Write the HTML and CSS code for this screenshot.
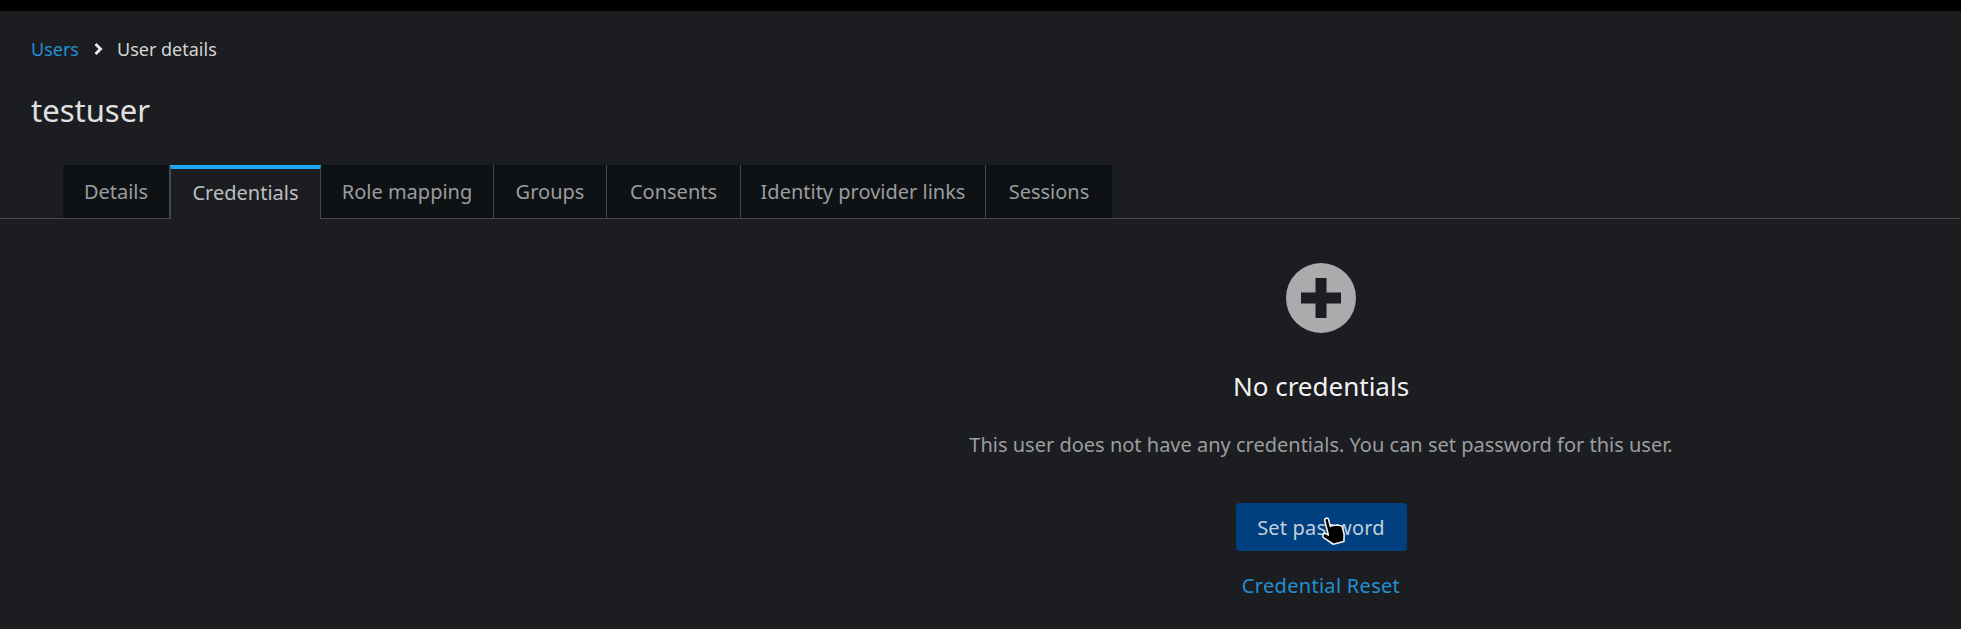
FILE: index.html
```html
<!DOCTYPE html>
<html lang="en">
<head>
    <meta charset="UTF-8">
    <meta name="viewport" content="width=device-width, initial-scale=1.0">
    <title>User details</title>
    <link rel="stylesheet" href="styles.css">
</head>
<body>

    <div class="top-bar"></div>

    <nav class="breadcrumb">
        <a href="#">Users</a>
        <svg class="breadcrumb-arrow" viewBox="0 0 10 14" width="10" height="14">
            <path d="M2.5 2 L7.5 7 L2.5 12" fill="none" stroke="#e6e6e6" stroke-width="3"/>
        </svg>
        <span>User details</span>
    </nav>

    <h1 class="page-title">testuser</h1>

    <div class="tabs">
        <a class="tab" href="#">Details</a>
        <a class="tab active" href="#">Credentials</a>
        <a class="tab" href="#">Role mapping</a>
        <a class="tab" href="#">Groups</a>
        <a class="tab" href="#">Consents</a>
        <a class="tab" href="#">Identity provider links</a>
        <a class="tab" href="#">Sessions</a>
    </div>

    <div class="tab-content">
        <div class="empty-state">
            <svg class="empty-icon" viewBox="0 0 70 70" width="70" height="70">
                <circle cx="35" cy="35" r="35" fill="#aaabad"/>
                <path d="M29.5 15 H40.5 V29.5 H55 V40.5 H40.5 V55 H29.5 V40.5 H15 V29.5 H29.5 Z" fill="#1b1d21"/>
            </svg>
            <h2>No credentials</h2>
            <p>This user does not have any credentials. You can set password for this user.</p>
            <div class="button-wrap">
                <button class="btn-primary">Set password</button>
                <svg class="cursor" viewBox="0 0 28 32" width="29" height="32">
                    <path transform="rotate(-14 14 16)" d="M9 4 C9 1.5 13 1.5 13 4 V11 C15 10.5 23.5 11.5 24.5 14 V22 L22.5 29 H11.5 L3.5 20 C2.5 17.5 5 15.5 7 17 L9 19 Z" fill="#000" stroke="#f2f2f2" stroke-width="1.6" stroke-linejoin="round"/>
                </svg>
            </div>
            <a class="secondary-link" href="#">Credential Reset</a>
        </div>
    </div>

</body>
</html>
```

FILE: styles.css
```css
body {
    font-family: "Noto Sans", sans-serif;
    font-size: 20px;
    background: #1b1d21;
    color: #d4d4d4;
    margin: 0;
    height: 629px;
    overflow: hidden;
}

.top-bar {
    height: 11px;
    background: #000;
}

.breadcrumb {
    display: flex;
    align-items: center;
    gap: 14px;
    padding: 25px 31px 0;
    font-size: 18px;
    line-height: 26px;
}

.breadcrumb a {
    color: #2290d2;
    text-decoration: none;
}

.page-title {
    margin: 0;
    padding: 30px 31px 0;
    font-size: 31px;
    font-weight: 400;
    line-height: 36px;
    color: #e0e0e0;
}

.tabs {
    display: grid;
    grid-template-columns: 107px 151px 173px 113px 134px 245px 126px;
    margin-top: 37px;
    padding-left: 63px;
    height: 53px;
    border-bottom: 1px solid #47484b;
}

.tab {
    height: 53px;
    line-height: 54px;
    box-sizing: border-box;
    background: #0f1214;
    border-right: 1px solid #47484b;
    color: #9b9c9e;
    text-align: center;
    text-decoration: none;
    white-space: nowrap;
}

.tab:last-child {
    border-right: none;
}

.tab.active {
    background: #1b1d21;
    border-top: 4px solid #1fa7f8;
    border-left: 1px solid #47484b;
    height: 54px;
    line-height: 48px;
    color: #bebfc0;
}

.tab-content {
    display: grid;
    grid-template-columns: 681px 1fr;
}

.empty-state {
    grid-column: 2;
    padding-top: 44px;
    display: flex;
    flex-direction: column;
    align-items: center;
    text-align: center;
}

.empty-icon {
    display: block;
}

.empty-state h2 {
    margin: 35px 0 0;
    font-size: 26px;
    font-weight: 400;
    line-height: 36px;
    color: #f2f2f2;
}

.empty-state p {
    margin: 27px 0 0;
    line-height: 28px;
    color: #9c9d9f;
    white-space: nowrap;
}

.button-wrap {
    position: relative;
    margin-top: 44px;
}

.btn-primary {
    display: block;
    width: 171px;
    height: 48px;
    padding: 0;
    background: #004080;
    border: none;
    border-radius: 4px;
    color: #c4cedb;
    font-family: inherit;
    font-size: 20px;
    letter-spacing: 0.2px;
}

.cursor {
    position: absolute;
    left: 82px;
    top: 12px;
}

.secondary-link {
    margin-top: 21px;
    color: #2290d2;
    letter-spacing: 0.3px;
    text-decoration: none;
}
```
